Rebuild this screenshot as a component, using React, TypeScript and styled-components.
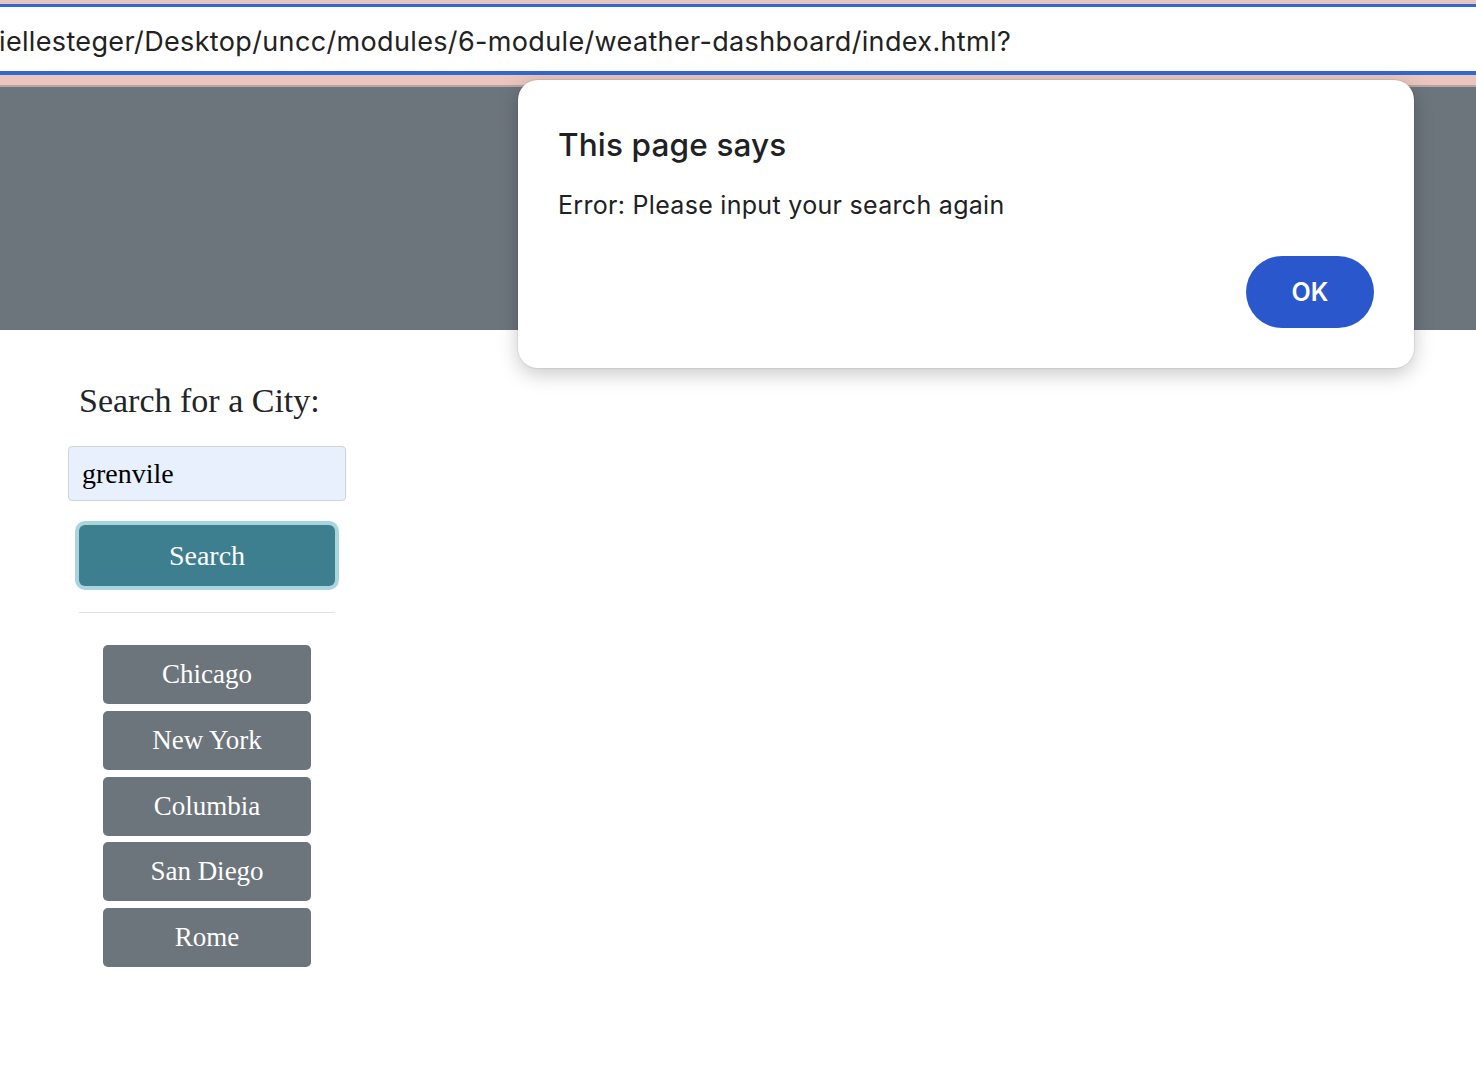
import styled, { createGlobalStyle } from "styled-components";

const cities = ["Chicago", "New York", "Columbia", "San Diego", "Rome"];

export default function App() {
  return (
    <>
      <GlobalStyle />
      <Page>
        <Chrome>
          <AddressBar>
            <Url>iellesteger/Desktop/uncc/modules/6-module/weather-dashboard/index.html?</Url>
          </AddressBar>
        </Chrome>
        <Header />
        <Sidebar>
          <Heading>Search for a City:</Heading>
          <CityInput defaultValue="grenvile" />
          <SearchButton>Search</SearchButton>
          <Divider />
          <CityList>
            {cities.map((city) => (
              <CityButton key={city}>{city}</CityButton>
            ))}
          </CityList>
        </Sidebar>
        <Dialog>
          <DialogTitle>This page says</DialogTitle>
          <DialogText>Error: Please input your search again</DialogText>
          <DialogActions>
            <OkButton>OK</OkButton>
          </DialogActions>
        </Dialog>
      </Page>
    </>
  );
}

const GlobalStyle = createGlobalStyle`
  body {
    margin: 0;
    background: #fff;
    font-family: "Liberation Serif", serif;
    color: #212529;
  }
`;

const Page = styled.div`
  position: relative;
  width: 1476px;
  min-height: 1068px;
  overflow: hidden;
`;

const Chrome = styled.div`
  background: #e9c6bd;
  padding-top: 4px;
  padding-bottom: 10px;
  border-bottom: 2px solid #b9a39e;
`;

const AddressBar = styled.div`
  height: 64px;
  background: #fff;
  border-top: 3px solid #3467d0;
  border-bottom: 4px solid #3467d0;
  display: flex;
  align-items: center;
  overflow: hidden;
`;

const Url = styled.div`
  font-family: Inter, "Liberation Sans", sans-serif;
  font-size: 27px;
  color: #222;
  white-space: nowrap;
  margin: 4px 0 0 -1px;
  letter-spacing: 0.35px;
`;

const Header = styled.div`
  height: 243px;
  background: #6c747c;
`;

const Sidebar = styled.div`
  width: 278px;
  margin-left: 68px;
  padding-top: 50px;
  display: flex;
  flex-direction: column;
`;

const Heading = styled.h2`
  margin: 0 0 25px 11px;
  font-size: 34px;
  font-weight: 400;
  line-height: 41px;
  color: #212529;
`;

const CityInput = styled.input`
  box-sizing: border-box;
  height: 55px;
  width: 100%;
  padding: 0 13px;
  border: 1px solid #ced4da;
  border-radius: 4px;
  background: #e8f0fe;
  font-family: "Liberation Serif", serif;
  font-size: 28px;
  color: #000;
  outline: none;
`;

const SearchButton = styled.button`
  box-sizing: border-box;
  margin: 24px 11px 0;
  height: 61px;
  border: none;
  border-radius: 6px;
  background: #3d7f8f;
  box-shadow: 0 0 0 4px #a9d5df;
  color: #fff;
  font-family: "Liberation Serif", serif;
  font-size: 28px;
  cursor: pointer;
`;

const Divider = styled.hr`
  margin: 26px 11px 0;
  border: none;
  border-top: 1px solid #dfe2e5;
`;

const CityList = styled.div`
  margin-top: 32px;
  display: flex;
  flex-direction: column;
  align-items: center;
  gap: 6.75px;
`;

const CityButton = styled.button`
  width: 208px;
  height: 59px;
  border: none;
  border-radius: 5px;
  background: #6c747c;
  color: #fff;
  font-family: "Liberation Serif", serif;
  font-size: 27px;
  cursor: pointer;
`;

const Dialog = styled.div`
  position: absolute;
  top: 80px;
  left: 518px;
  width: 896px;
  height: 288px;
  box-sizing: border-box;
  padding: 0 40px 40px 40px;
  background: #fff;
  border-radius: 20px;
  box-shadow: 0 6px 20px rgba(0, 0, 0, 0.22), 0 0 0 1px rgba(0, 0, 0, 0.06);
  display: flex;
  flex-direction: column;
  font-family: Inter, "Liberation Sans", sans-serif;
  color: #202124;
`;

const DialogTitle = styled.h1`
  margin: 43px 0 0;
  font-size: 31.5px;
  font-weight: 500;
  line-height: 44px;
  letter-spacing: 0.15px;
`;

const DialogText = styled.p`
  margin: 22px 0 0;
  font-size: 25px;
  line-height: 32px;
  letter-spacing: 0.3px;
`;

const DialogActions = styled.div`
  margin-top: auto;
  display: flex;
  justify-content: flex-end;
`;

const OkButton = styled.button`
  width: 128px;
  height: 72px;
  border: none;
  border-radius: 36px;
  background: #2a58cc;
  color: #fff;
  font-family: Inter, "Liberation Sans", sans-serif;
  font-size: 25px;
  font-weight: 600;
  cursor: pointer;
`;
